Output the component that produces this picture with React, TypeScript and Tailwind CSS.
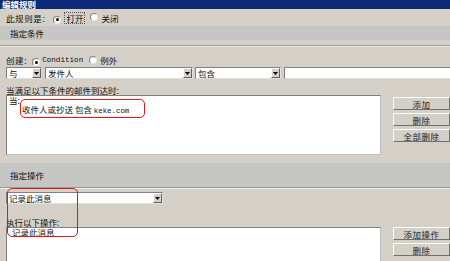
import React from "react";

function Radio({ checked }: { checked?: boolean }) {
  return (
    <span className="inline-flex items-center justify-center w-[8px] h-[8px] rounded-full bg-white border border-t-[#808080] border-l-[#808080] border-b-[#e8e8e8] border-r-[#e8e8e8] shrink-0">
      {checked && <span className="w-[3px] h-[3px] rounded-full bg-black" />}
    </span>
  );
}

function Arrow() {
  return (
    <span className="flex items-center justify-center w-[9px] h-[10px] bg-[#d4d0c8] border border-t-white border-l-white border-b-[#606060] border-r-[#606060] shrink-0">
      <svg width="5" height="3" viewBox="0 0 5 3">
        <path d="M0 0H5L2.5 3Z" fill="#000" />
      </svg>
    </span>
  );
}

function Select({ w, text }: { w: string; text: string }) {
  return (
    <div className={`${w} h-[12px] flex items-center bg-white border border-t-[#808080] border-l-[#808080] border-b-[#e0e0e0] border-r-[#e0e0e0] pl-[2px] pr-0 shrink-0`}>
      <span className="flex-1 leading-[10px] whitespace-nowrap overflow-hidden">{text}</span>
      <Arrow />
    </div>
  );
}

function Btn({ text }: { text: string }) {
  return (
    <div className="w-[57px] h-[13px] flex items-center justify-center bg-[#d4d0c8] border border-t-white border-l-white border-b-[#707070] border-r-[#707070] leading-[10px] text-[#222] tracking-[0.5px]">
      {text}
    </div>
  );
}

export default function App() {
  return (
    <div className="relative w-[450px] h-[261px] overflow-hidden bg-[#d4d0c8] text-[#111] text-[8.5px] font-['Noto_Sans_CJK_SC','Noto_Sans',sans-serif]">
      {/* title */}
      <div className="h-[9px] bg-[#0c2a78] text-white font-bold text-[8.5px] leading-[8px] pl-[2px] overflow-hidden whitespace-nowrap">
        编辑规则
      </div>
      {/* row 1 */}
      <div className="h-[17px] flex items-center pl-[6px]">
        <span className="leading-[10px] tracking-[0.6px]">此规则是:</span>
        <span className="ml-[8px]"><Radio checked /></span>
        <span className="ml-[3px] px-[1px] leading-[10px] border border-dotted border-[#555]">打开</span>
        <span className="ml-[5px]"><Radio /></span>
        <span className="ml-[3px] leading-[10px]">关闭</span>
      </div>
      {/* band 1 */}
      <div className="h-[14px] bg-[#c6c6c4] flex items-center pl-[10px] leading-[10px]">指定条件</div>
      <div className="h-[5px]" />
      <div className="h-[2px] border-t border-t-[#9a9a96] border-b border-b-[#eeeeea]" />
      {/* create row */}
      <div className="mt-[7px] h-[12px] flex items-center pl-[6px]">
        <span className="leading-[10px] tracking-[0.6px]">创建:</span>
        <span className="ml-[5px]"><Radio checked /></span>
        <span className="ml-[2px] font-['Liberation_Mono',monospace] text-[7.6px] leading-[10px]">Condition</span>
        <span className="ml-[6px]"><Radio /></span>
        <span className="ml-[3px] leading-[10px]">例外</span>
      </div>
      {/* selects */}
      <div className="mt-[1px] flex items-center pl-[6px]">
        <Select w="w-[36px]" text="与" />
        <div className="w-[3px]" />
        <Select w="w-[148px]" text="发件人" />
        <div className="w-[2px]" />
        <Select w="w-[86px]" text="包含" />
        <div className="w-[3px]" />
        <div className="flex-1 h-[12px] bg-white border border-t-[#808080] border-l-[#808080] border-b-[#e0e0e0] border-r-0" />
      </div>
      {/* label */}
      <div className="mt-[5px] h-[11px] flex items-center pl-[6px] leading-[10px]">当满足以下条件的邮件到达时:</div>
      {/* textarea + buttons */}
      <div className="flex pl-[6px]">
        <div className="w-[376px] h-[60px] bg-white border border-t-[#808080] border-l-[#808080] border-b-[#c0c0c0] border-r-[#c0c0c0] pl-[2px] pt-[0px] leading-[9px]">
          <div>当:</div>
          <div className="pl-[13px] whitespace-nowrap">
            收件人或抄送 包含 <span className="font-['Liberation_Mono',monospace] text-[7.4px]">keke.com</span>
          </div>
        </div>
        <div className="ml-[12px] pt-[2px] flex flex-col gap-[3px]">
          <Btn text="添加" />
          <Btn text="删除" />
          <Btn text="全部删除" />
        </div>
      </div>
      <div className="h-[8px]" />
      {/* band 2 */}
      <div className="h-[24px] bg-[#c6c6c4] flex items-center pl-[10px] leading-[10px]">指定操作</div>
      <div className="h-[2px] border-t border-t-[#9a9a96] border-b border-b-[#eeeeea]" />
      <div className="mt-[3px] pl-[6px]">
        <Select w="w-[157px]" text="记录此消息" />
      </div>
      <div className="mt-[12px] h-[11px] flex items-center pl-[6px] leading-[10px]">执行以下操作:</div>
      <div className="flex pl-[6px]">
        <div className="w-[376px] h-[50px] bg-white border border-t-[#808080] border-l-[#808080] border-b-[#c0c0c0] border-r-[#c0c0c0] pl-[5px] leading-[9px]">
          记录此消息
        </div>
        <div className="ml-[12px] flex flex-col gap-[3px]">
          <Btn text="添加操作" />
          <Btn text="删除" />
        </div>
      </div>
      {/* red annotations */}
      <div className="absolute left-[20px] top-[99px] w-[125px] h-[19px] border-[1.5px] border-[#e01818] rounded-[5px]" />
      <div className="absolute left-[7px] top-[188px] w-[71px] h-[49px] border-[1.5px] border-[#e01818] rounded-[5px]" />
    </div>
  );
}
